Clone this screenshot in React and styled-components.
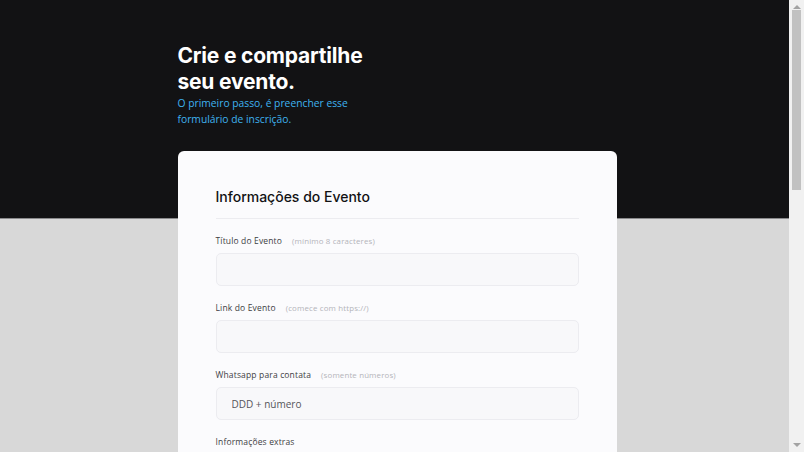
import React from "react";
import styled, { createGlobalStyle } from "styled-components";

const GlobalStyle = createGlobalStyle`
  * { box-sizing: border-box; }
  body {
    margin: 0;
    padding-right: 15px;
    background: #d8d8d8;
    font-family: "Open Sans", "Liberation Sans", sans-serif;
  }
`;

const ScrollTrack = styled.div`
  position: fixed;
  top: 0;
  right: 0;
  width: 15px;
  height: 100vh;
  background: #f1f1f1;
  display: flex;
  flex-direction: column;
  align-items: center;
`;

const ScrollArrow = styled.div`
  width: 0;
  height: 0;
  margin: 5px 0;
  border-left: 4px solid transparent;
  border-right: 4px solid transparent;
  ${(p) => (p.down ? "border-top: 4px solid #a3a3a3;" : "border-bottom: 4px solid #a3a3a3;")}
`;

const ScrollThumb = styled.div`
  width: 9px;
  height: 180px;
  margin-top: -4px;
  background: #c1c1c1;
`;

const ScrollFill = styled.div`
  flex: 1;
`;

const Header = styled.header`
  height: 219px;
  background: #121214;
  border-bottom: 1px solid #8a8a8c;
  padding-top: 43px;
`;

const Inner = styled.div`
  width: 439px;
  margin-left: calc(50% - 217px);
`;

const Title = styled.h1`
  margin: 0;
  width: 200px;
  color: #ffffff;
  font-family: Inter, "Liberation Sans", sans-serif;
  font-size: 21px;
  font-weight: 700;
  line-height: 26px;
  letter-spacing: -0.2px;
`;

const Subtitle = styled.p`
  margin: 0;
  width: 180px;
  color: #3fb2f0;
  font-size: 10.3px;
  line-height: 16px;
`;

const Card = styled.main`
  margin-top: -68px;
  background: #fbfbfd;
  border-radius: 6px;
  padding: 36px 38px 40px;
`;

const CardTitle = styled.h2`
  margin: 0;
  padding-bottom: 11px;
  border-bottom: 1px solid #ececf0;
  color: #121214;
  font-family: Inter, "Liberation Sans", sans-serif;
  font-size: 14px;
  font-weight: 500;
  line-height: 20px;
`;

const Field = styled.div`
  display: flex;
  flex-direction: column;
  gap: 6px;
  margin-top: 16px;
`;

const Label = styled.label`
  display: flex;
  align-items: baseline;
  gap: 10px;
  color: #3e3e44;
  font-size: 8.5px;
  line-height: 12px;
  letter-spacing: 0.15px;
`;

const Hint = styled.span`
  color: #b4b4ba;
  font-size: 7.9px;
`;

const Input = styled.input`
  height: 33px;
  border: 1px solid #ececf0;
  border-radius: 5px;
  background: #f8f8fa;
  padding: 0 15px;
  font-family: inherit;
  font-size: 10px;
  color: #3e3e44;
  outline: none;
  &::placeholder { color: #55555b; }
`;

const TextArea = styled.textarea`
  height: 120px;
  border: 1px solid #ececf0;
  border-radius: 5px;
  background: #f8f8fa;
  padding: 12px 15px;
  font-family: inherit;
  resize: none;
`;

const Submit = styled.button`
  margin-top: 24px;
  width: 100%;
  height: 40px;
  border: none;
  border-radius: 5px;
  background: #3fb2f0;
  color: #fff;
  font-family: inherit;
  font-size: 11px;
  font-weight: 600;
`;

const Spacer = styled.div`
  height: 260px;
`;

const fields = [
  { label: "Título do Evento", hint: "(mínimo 8 caracteres)" },
  { label: "Link do Evento", hint: "(comece com https://)" },
  { label: "Whatsapp para contata", hint: "(somente números)", placeholder: "DDD + número" },
];

export default function App() {
  return (
    <>
      <GlobalStyle />
      <Header>
        <Inner>
          <Title>Crie e compartilhe seu evento.</Title>
          <Subtitle>O primeiro passo, é preencher esse formulário de inscrição.</Subtitle>
        </Inner>
      </Header>
      <Inner>
        <Card>
          <CardTitle>Informações do Evento</CardTitle>
          {fields.map((f) => (
            <Field key={f.label}>
              <Label>
                {f.label}
                <Hint>{f.hint}</Hint>
              </Label>
              <Input placeholder={f.placeholder} />
            </Field>
          ))}
          <Field>
            <Label>Informações extras</Label>
            <TextArea />
          </Field>
          <Submit>Enviar inscrição</Submit>
        </Card>
      </Inner>
      <Spacer />
      <ScrollTrack>
        <ScrollArrow />
        <ScrollThumb />
        <ScrollFill />
        <ScrollArrow down />
      </ScrollTrack>
    </>
  );
}
